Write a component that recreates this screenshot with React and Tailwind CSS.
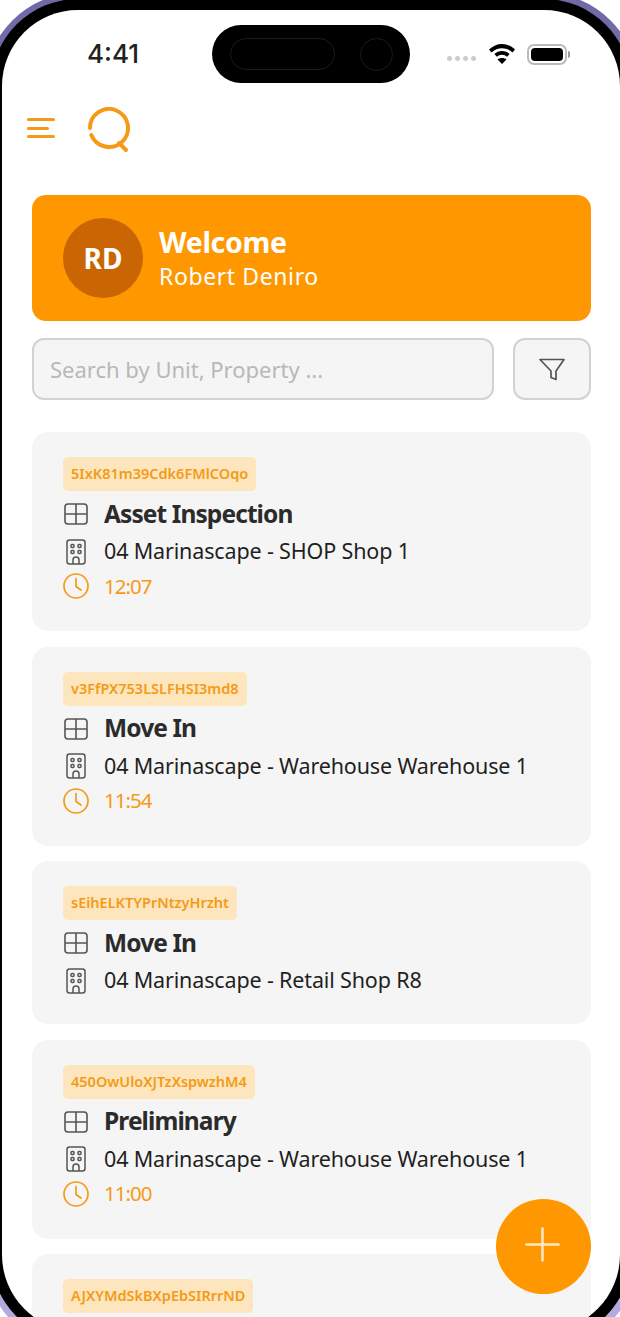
import React from "react";
import { Plus } from "lucide-react";

const items = [
  { tag: "5IxK81m39Cdk6FMlCOqo", title: "Asset Inspection", place: "04 Marinascape - SHOP Shop 1", time: "12:07" },
  { tag: "v3FfPX753LSLFHSI3md8", title: "Move In", place: "04 Marinascape - Warehouse Warehouse 1", time: "11:54" },
  { tag: "sEihELKTYPrNtzyHrzht", title: "Move In", place: "04 Marinascape - Retail Shop R8" },
  { tag: "450OwUloXJTzXspwzhM4", title: "Preliminary", place: "04 Marinascape - Warehouse Warehouse 1", time: "11:00" },
  { tag: "AJXYMdSkBXpEbSIRrrND" },
];

const GridIcon = () => (
  <svg width="26" height="26" viewBox="0 0 26 26" fill="none" stroke="#555" strokeWidth="1.6">
    <rect x="2" y="3" width="22" height="20" rx="3" />
    <path d="M13 3v20M2 13h22" />
  </svg>
);

const BuildingIcon = () => (
  <svg width="26" height="28" viewBox="0 0 26 28" fill="none" stroke="#555" strokeWidth="1.5">
    <rect x="4" y="2" width="18" height="24" rx="2.5" />
    <rect x="8" y="6.5" width="3" height="3" rx="1" />
    <rect x="15" y="6.5" width="3" height="3" rx="1" />
    <rect x="8" y="12.5" width="3" height="3" rx="1" />
    <rect x="15" y="12.5" width="3" height="3" rx="1" />
    <path d="M10 26v-4a3 3 0 0 1 6 0v4" />
  </svg>
);

const ClockIcon = () => (
  <svg width="26" height="26" viewBox="0 0 26 26" fill="none" stroke="#f59a17" strokeWidth="1.7" strokeLinecap="round">
    <circle cx="13" cy="13" r="12" />
    <path d="M13 5.500V13.500l5 3.500" />
  </svg>
);

const FilterIcon = () => (
  <svg width="26" height="23" viewBox="0 0 26 23" fill="none" stroke="#555" strokeWidth="1.7" strokeLinejoin="round">
    <path d="M1 1.500h24L17 13v8.500l-5-2V13z" />
  </svg>
);

const LogoIcon = () => (
  <svg width="44" height="46" viewBox="0 0 44 46" fill="none" stroke="#f59a17" strokeWidth="4" strokeLinecap="round">
    <path d="M2 21A19 19 0 1 1 3.340 28" />
    <path d="M31 36l7 7" />
  </svg>
);

const WifiIcon = () => (
  <svg width="28" height="22" viewBox="0 0 28 22" fill="#000">
    <path d="M14 1C9 1 5 3 1 6.500l2.500 3C6.500 6.800 10 5.300 14 5.300s7.500 1.500 10.500 4.200l2.500-3C23 3 19 1 14 1z" />
    <path d="M14 8c-3 0-5.600 1-7.600 3l2.500 2.800c1.400-1.300 3.100-2 5.100-2s3.700.7 5.100 2l2.500-2.800c-2-2-4.600-3-7.600-3z" />
    <path d="M9.500 16.500L14 21l4.500-4.500c-1.200-1-2.800-1.500-4.500-1.500s-3.300.5-4.500 1.500z" />
  </svg>
);

const StatusBar = () => (
  <div className="relative flex h-[90px] shrink-0 items-start justify-between pl-[55px] pr-[24px]">
    <span className="mt-[26px] font-['Inter',sans-serif] text-[26px] font-medium leading-[36px] text-[#222]">4:41</span>
    <div className="absolute left-[180px] top-[15px] flex h-[58px] w-[198px] items-center gap-[25px] rounded-full bg-black pl-[18px]">
      <div className="h-[32px] w-[105px] rounded-full border border-[#1c1c1c]" />
      <div className="h-[33px] w-[33px] rounded-full border border-[#1c1c1c]" />
    </div>
    <div className="mt-[33px] flex items-center">
      <div className="mr-[12px] mt-[8px] flex gap-[3px]">
        <span className="h-[5px] w-[5px] rounded-full bg-[#ccc]" />
        <span className="h-[5px] w-[5px] rounded-full bg-[#ccc]" />
        <span className="h-[5px] w-[5px] rounded-full bg-[#ccc]" />
        <span className="h-[5px] w-[5px] rounded-full bg-[#ccc]" />
      </div>
      <WifiIcon />
      <div className="relative ml-[11px] flex h-[21px] w-[40px] rounded-[7px] border-2 border-[#bbb] p-[2px]">
        <div className="flex-1 rounded-[4px] bg-black" />
        <span className="absolute -right-[5px] top-[5px] h-[7px] w-[2px] rounded-r bg-[#999]" />
      </div>
    </div>
  </div>
);

const Card = ({ item }) => (
  <div className={`rounded-[16px] bg-[#f5f5f5] pl-[31px] pr-[24px] pt-[25px] ${item.time ? "pb-[29px]" : "pb-[25px]"}`}>
    <div className="inline-flex h-[34px] items-center rounded-[5px] bg-[#fde6bd] px-[8px] text-[14.5px] font-semibold text-[#f59a17]">
      {item.tag}
    </div>
    {item.title && (
      <>
        <div className="mt-[4px] flex h-[38px] items-center gap-[15px]">
          <GridIcon />
          <span className="text-[24.5px] font-bold tracking-[-0.9px] text-[#2b2b2b]">{item.title}</span>
        </div>
        <div className="flex h-[37px] items-center gap-[15px]">
          <BuildingIcon />
          <span className="text-[21.5px] tracking-[-0.15px] text-[#1f1f1f]">{item.place}</span>
        </div>
      </>
    )}
    {item.time && (
      <div className="flex h-[32px] items-center gap-[15px]">
        <ClockIcon />
        <span className="text-[20.5px] tracking-[-1px] text-[#f59a17]">{item.time}</span>
      </div>
    )}
  </div>
);

export default function App() {
  return (
    <div className="relative h-[1317px] w-[620px] overflow-hidden bg-white font-['Noto_Sans','Open_Sans',sans-serif]">
      <div className="-ml-[15.5px] -mt-[7.5px] h-[1356px] w-[653px] rounded-[93.5px] bg-linear-to-b from-[#6e6aa6] to-[#b3addf] p-[6.5px]">
        <div className="h-full rounded-[87px] bg-black p-[11px]">
          <div className="flex h-full flex-col overflow-hidden rounded-[76px] bg-white pl-[30px] pr-[29px]">
            <StatusBar />
            <div className="-ml-[5px] flex h-[95px] shrink-0 items-start gap-[33px]">
              <div className="mt-[18px] flex w-[28px] flex-col gap-[5.5px]">
                <span className="h-[3px] w-full rounded bg-[#f59a17]" />
                <span className="h-[3px] w-[22px] rounded bg-[#f59a17]" />
                <span className="h-[3px] w-full rounded bg-[#f59a17]" />
              </div>
              <div className="mt-[7px]">
                <LogoIcon />
              </div>
            </div>
            <div className="flex h-[126px] shrink-0 items-center gap-[16px] rounded-[14px] bg-[#ff9800] pl-[31px]">
              <div className="flex h-[80px] w-[80px] items-center justify-center rounded-full bg-[#c96503] text-[28px] font-bold text-white">
                RD
              </div>
              <div className="text-white">
                <div className="text-[28.5px] font-bold leading-[36px] tracking-[-0.3px]">Welcome</div>
                <div className="text-[23px] leading-[32px] tracking-[0.6px]">Robert Deniro</div>
              </div>
            </div>
            <div className="mt-[17px] flex shrink-0 gap-[19px]">
              <div className="flex h-[62px] flex-1 items-center rounded-[12px] border-2 border-[#d2d2d2] bg-[#f5f5f5] px-[16px] text-[22px] text-[#b8b8b8]">
                Search by Unit, Property ...
              </div>
              <div className="flex h-[62px] w-[78px] items-center justify-center rounded-[12px] border-2 border-[#d2d2d2] bg-[#f5f5f5]">
                <FilterIcon />
              </div>
            </div>
            <div className="mt-[32px] flex flex-col gap-[15.5px]">
              {items.map((item) => (
                <Card key={item.tag} item={item} />
              ))}
            </div>
          </div>
        </div>
      </div>
      <button className="absolute left-[496px] top-[1199px] flex h-[95px] w-[95px] items-center justify-center rounded-full bg-[#ff9800]">
        <span className="mb-[5px] mr-[2px]">
          <Plus size={55} strokeWidth={1.1} color="#ffe9c9" />
        </span>
      </button>
    </div>
  );
}
